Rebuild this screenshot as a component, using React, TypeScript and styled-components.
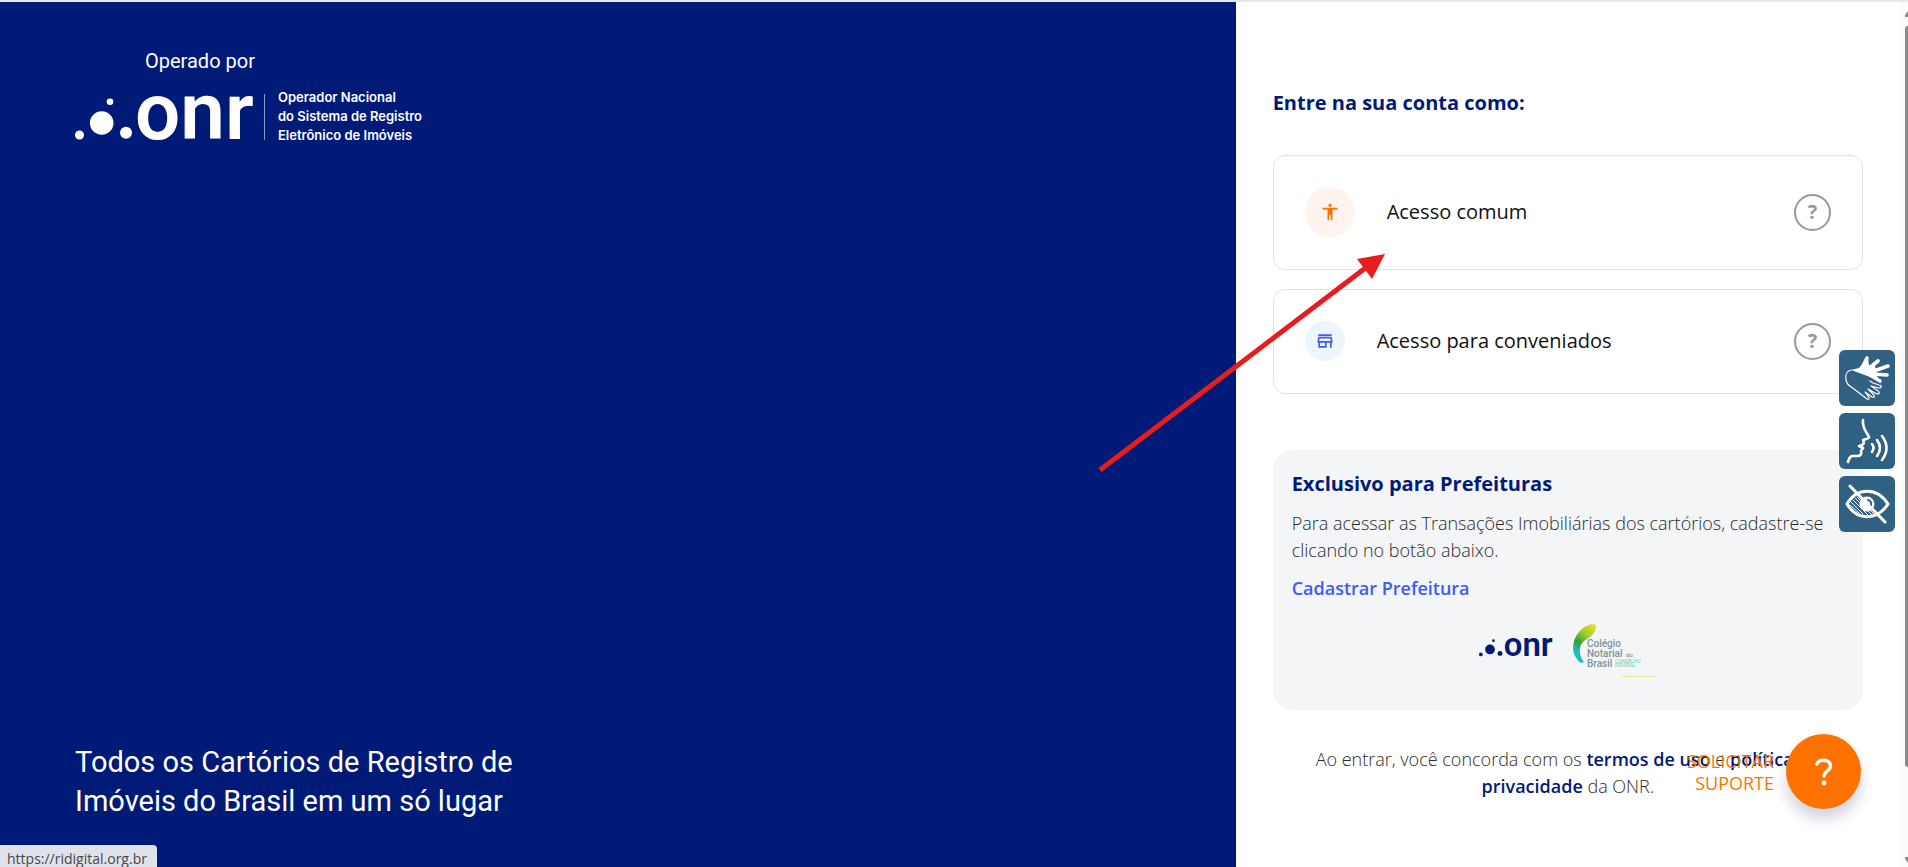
import React from 'react';
import styled, { createGlobalStyle } from 'styled-components';
import { MdAccessibility, MdOutlineStore } from 'react-icons/md';

const GlobalStyle = createGlobalStyle`
  *, *::before, *::after { box-sizing: border-box; }
  body {
    margin: 0;
    background: #fff;
    font-family: 'Open Sans', 'Noto Sans', sans-serif;
  }
  h1, h2, p { margin: 0; }
  button { font: inherit; cursor: pointer; }
`;

const Page = styled.div`
  position: relative;
  display: flex;
  min-height: 100vh;
  overflow: hidden;
  border-top: 2px solid #e9e6ea;
`;

const Columns = styled.div`
  flex: 1;
  display: grid;
  grid-template-columns: 65fr 35fr;
`;

const Hero = styled.section`
  display: flex;
  flex-direction: column;
  justify-content: space-between;
  padding: 44px 75px 46px;
  background: #001a77;
  color: #fff;
  font-family: Roboto, sans-serif;
`;

const Operator = styled.div`
  display: flex;
  flex-direction: column;
  align-items: flex-start;
`;

const OperatedBy = styled.p`
  padding-left: 70px;
  font-size: 20px;
  line-height: 30px;
`;

const Brand = styled.div`
  display: flex;
  align-items: center;
  margin-top: 12px;
`;

const Divider = styled.span`
  width: 1px;
  height: 46px;
  margin: 0 13px 0 12px;
  background: #8c97c2;
`;

const BrandName = styled.p`
  font-family: Inter, sans-serif;
  font-size: 13px;
  font-weight: 600;
  line-height: 19px;
  white-space: pre-line;
`;

const Slogan = styled.h1`
  max-width: 460px;
  font-size: 29px;
  font-weight: 400;
  line-height: 39px;
`;

const Access = styled.main`
  display: flex;
  flex-direction: column;
  padding: 87px 38px 40px 37px;
`;

const Title = styled.h2`
  color: #001a77;
  font-size: 20px;
  font-weight: 700;
  line-height: 28px;
`;

const Options = styled.div`
  display: flex;
  flex-direction: column;
  gap: 19px;
  margin: 38px 0 56px;
`;

const Option = styled.div`
  display: flex;
  align-items: center;
  padding: 31px 31px 32px;
  border: 1px solid #e3e3e6;
  border-radius: 12px;
`;

const OptionButton = styled.button`
  flex: 1;
  display: flex;
  align-items: center;
  gap: 32px;
  padding: 0;
  border: 0;
  background: none;
  color: #111;
  font-size: 20px;
  line-height: 28px;
  text-align: left;
`;

const Badge = styled.span<{ $size: number; $bg: string; $fg: string }>`
  display: flex;
  align-items: center;
  justify-content: center;
  width: ${(p) => p.$size}px;
  height: ${(p) => p.$size}px;
  border-radius: 50%;
  background: ${(p) => p.$bg};
  color: ${(p) => p.$fg};
`;

const HelpButton = styled.button`
  width: 37px;
  height: 37px;
  padding: 0;
  border: 2px solid #999;
  border-radius: 50%;
  background: #fff;
  color: #999;
  font-size: 20px;
  font-weight: 700;
  line-height: 28px;
`;

const CityCard = styled.section`
  padding: 20px 19px 30px;
  border-radius: 20px;
  background: #f3f5f7;
`;

const Body = styled.p`
  margin: 12px 0 11px;
  color: #2b2b2b;
  font-size: 18px;
  font-weight: 300;
  line-height: 27px;
`;

const RegisterLink = styled.a`
  display: block;
  color: #3d5afe;
  font-size: 18px;
  font-weight: 600;
  line-height: 27px;
  text-decoration: none;
`;

const Partners = styled.div`
  display: flex;
  justify-content: center;
  gap: 20px;
  margin-top: 20px;
  color: #001a77;

  svg:first-child { margin-top: 15px; }
`;

const Terms = styled.p`
  margin-top: 36px;
  padding: 0 40px;
  color: #2b2b2b;
  font-size: 18px;
  font-weight: 300;
  line-height: 27px;
  text-align: center;

  a {
    color: #001a77;
    font-weight: 600;
    text-decoration: none;
  }
`;

const Scrollbar = styled.div`
  display: flex;
  flex-direction: column;
  align-items: flex-end;
  width: 7px;
  padding: 9px 0 4px;
  background: #fbfbfb;
`;

const Thumb = styled.div`
  flex: 1;
  width: 3px;
  margin: 9px 0 90px;
  border-radius: 3px 0 0 3px;
  background: #8b8b8b;
`;

const Tools = styled.nav`
  position: absolute;
  top: 348px;
  right: 13px;
  display: flex;
  flex-direction: column;
  gap: 7px;
`;

const ToolButton = styled.button`
  display: block;
  width: 56px;
  height: 56px;
  padding: 0;
  border: 0;
  border-radius: 6px;
  background: #306182;
  color: #fff;
`;

const Support = styled.div`
  position: absolute;
  right: 47px;
  bottom: 58px;
  display: flex;
  align-items: center;
  gap: 12px;
`;

const SupportLabel = styled.label`
  width: 100px;
  color: #ff7200;
  font-size: 18px;
  line-height: 22px;
  text-align: right;
  cursor: pointer;
`;

const SupportButton = styled.button`
  display: flex;
  align-items: center;
  justify-content: center;
  width: 75px;
  height: 75px;
  padding: 0;
  border: 0;
  border-radius: 50%;
  background: #ff7200;
  color: #fff;
  box-shadow: 0 10px 14px rgba(30, 35, 90, 0.2);
`;

const StatusBar = styled.div`
  position: absolute;
  left: 0;
  bottom: 0;
  height: 22px;
  padding: 3px 10px 0 7px;
  border-radius: 0 4px 0 0;
  background: #dfe1eb;
  color: #474747;
  font-size: 14px;
  line-height: 22px;
`;

const Pointer = styled.svg`
  position: absolute;
  top: 250px;
  left: 1096px;
  pointer-events: none;
`;

const LogoSvg = styled.svg`
  overflow: visible;
`;

function OnrLogo({ width, height }: { width: number; height: number }) {
  return (
    <LogoSvg width={width} height={height} viewBox="0 0 177 48" fill="currentColor" role="img" aria-label="ONR">
      <circle cx="4.5" cy="42" r="4.5" />
      <circle cx="26.7" cy="30" r="11.8" />
      <circle cx="35" cy="8.7" r="3.3" />
      <circle cx="51" cy="39.7" r="6" />
      <text x="60" y="46" fontFamily="Roboto, sans-serif" fontSize="80" fontWeight="600">
        onr
      </text>
    </LogoSvg>
  );
}

function NotaryLogo() {
  return (
    <svg width="84" height="58" viewBox="0 0 84 58" role="img" aria-label="Colégio Notarial do Brasil">
      <defs>
        <linearGradient id="leaf" x1="0.8" y1="0" x2="0.3" y2="1">
          <stop offset="0" stopColor="#d9e021" />
          <stop offset="0.3" stopColor="#a4cc2c" />
          <stop offset="0.6" stopColor="#2f9e3a" />
          <stop offset="0.82" stopColor="#1fbfae" />
          <stop offset="1" stopColor="#19b9e6" />
        </linearGradient>
      </defs>
      <path d="M24 3C20 1 13 3 7 10C0 18 -1 30 5 37C7 40 9 42 12 40C7 34 6 25 11 20C15 16 24 14 24 3Z" fill="url(#leaf)" />
      <g fill="#80919c" fontFamily="Roboto, sans-serif" fontWeight="500">
        <text x="15" y="25" fontSize="10">Colégio</text>
        <text x="15" y="35" fontSize="10">Notarial</text>
        <text x="15" y="45" fontSize="10">Brasil</text>
        <text x="54" y="35" fontSize="6">do</text>
      </g>
      <g fill="#6fcfae" fontFamily="Roboto, sans-serif" fontSize="5">
        <text x="43" y="41">CONSELHO</text>
        <text x="43" y="45">FEDERAL</text>
      </g>
      <path d="M50 54.500H84" stroke="#dfe79a" strokeWidth="1" />
    </svg>
  );
}

function HandsIcon() {
  return (
    <svg width="56" height="56" viewBox="0 0 56 56" fill="none" stroke="currentColor" strokeLinecap="round" strokeLinejoin="round">
      <path d="M12 20L20 18L29 8L30 15L36 16L38 26L40 31L31 27L23 24Z" fill="currentColor" stroke="none" />
      <path d="M23 18L28 8M28 20L39 11M32 22L49 16M33 24L48 25M31 25L41 31" strokeWidth="3.6" />
      <path d="M12 20C8 21 6 25 7 30C8 34 9 35 11 36L19 42L28 49C30 50 31 48 29 46L26 42L33 47C36 48 36 46 34 44L29 39L38 44C41 44 41 42 38 40L32 36L40 38C43 38 43 35 40 35L34 33L31 31" strokeWidth="1.2" />
    </svg>
  );
}

function VoiceIcon() {
  return (
    <svg width="56" height="56" viewBox="0 0 56 56" fill="none" stroke="currentColor" strokeWidth="2.6" strokeLinecap="round" strokeLinejoin="round">
      <path d="M24 7C23 15 27 18 30 24C30 26 26 26 24 27C26 31 24 32 20 33L24 35L22 38C23 42 21 43 18 43H13C10 44 10 46 9 49" />
      <path d="M33 31Q36 35 33 39M38 27Q44 35 38 43M43 23Q52 35 43 47" />
    </svg>
  );
}

function EyeIcon() {
  return (
    <svg width="56" height="56" viewBox="0 0 56 56" fill="none" stroke="currentColor" strokeLinecap="round" strokeLinejoin="round">
      <path d="M8 28C18 11 38 11 49 28C38 45 18 45 8 28Z" strokeWidth="3" />
      <path d="M12 26L24 38M14 24L29 39M16 22L33 39M11 29L21 38M18 21L35 38" strokeWidth="1" />
      <circle cx="28" cy="28" r="7.5" fill="currentColor" stroke="none" />
      <path d="M29 24Q33 25 32 30" stroke="#306182" strokeWidth="2" />
      <path d="M11 10L46 46" strokeWidth="3" />
    </svg>
  );
}

function App() {
  return (
    <>
      <GlobalStyle />
      <Page>
        <Columns>
          <Hero>
            <Operator>
              <OperatedBy>Operado por</OperatedBy>
              <Brand>
                <OnrLogo width={177} height={48} />
                <Divider />
                <BrandName>{'Operador Nacional\ndo Sistema de Registro\nEletrônico de Imóveis'}</BrandName>
              </Brand>
            </Operator>
            <Slogan>Todos os Cartórios de Registro de Imóveis do Brasil em um só lugar</Slogan>
          </Hero>

          <Access>
            <Title>Entre na sua conta como:</Title>
            <Options>
              <Option>
                <OptionButton>
                  <Badge $size={50} $bg="#fff3f0" $fg="#ff7200"><MdAccessibility size={20} /></Badge>
                  Acesso comum
                </OptionButton>
                <HelpButton aria-label="Ajuda sobre acesso comum">?</HelpButton>
              </Option>
              <Option>
                <OptionButton>
                  <Badge $size={40} $bg="#eef5ff" $fg="#3d5afe"><MdOutlineStore size={20} /></Badge>
                  Acesso para conveniados
                </OptionButton>
                <HelpButton aria-label="Ajuda sobre acesso para conveniados">?</HelpButton>
              </Option>
            </Options>

            <CityCard>
              <Title>Exclusivo para Prefeituras</Title>
              <Body>
                Para acessar as Transações Imobiliárias dos cartórios, cadastre-se clicando no botão abaixo.
              </Body>
              <RegisterLink href="#prefeitura">Cadastrar Prefeitura</RegisterLink>
              <Partners>
                <OnrLogo width={73} height={20} />
                <NotaryLogo />
              </Partners>
            </CityCard>

            <Terms>
              Ao entrar, você concorda com os <a href="#termos">termos de uso</a> e{' '}
              <a href="#privacidade">política de privacidade</a> da ONR.
            </Terms>
          </Access>
        </Columns>

        <Scrollbar aria-hidden="true">
          <svg width="3" height="6" viewBox="0 0 3 6"><path d="M3 0L0 4V6H3Z" fill="#8b8b8b" /></svg>
          <Thumb />
          <svg width="3" height="6" viewBox="0 0 3 6"><path d="M0 0H3V6L0 2Z" fill="#8b8b8b" /></svg>
        </Scrollbar>

        <Tools aria-label="Acessibilidade">
          <ToolButton aria-label="Libras"><HandsIcon /></ToolButton>
          <ToolButton aria-label="Voz"><VoiceIcon /></ToolButton>
          <ToolButton aria-label="Visão"><EyeIcon /></ToolButton>
        </Tools>

        <Support>
          <SupportLabel htmlFor="support">SOLICITAR SUPORTE</SupportLabel>
          <SupportButton id="support">
            <svg width="24" height="30" viewBox="0 0 24 30" fill="none" stroke="currentColor" strokeWidth="3.4" strokeLinecap="round" aria-hidden="true">
              <path d="M5 7C6 2 18.500 1.500 18.500 9C18.500 14 12 14 12 19" />
              <circle cx="12" cy="26" r="2.400" fill="currentColor" stroke="none" />
            </svg>
          </SupportButton>
        </Support>

        <StatusBar>https://ridigital.org.br</StatusBar>

        <Pointer width="292" height="222" viewBox="0 0 292 222" aria-hidden="true">
          <path d="M4 218L272 14" stroke="#e81c1c" strokeWidth="5" />
          <path d="M289 2L261 7L276 27Z" fill="#e81c1c" />
        </Pointer>
      </Page>
    </>
  );
}

export default App;
